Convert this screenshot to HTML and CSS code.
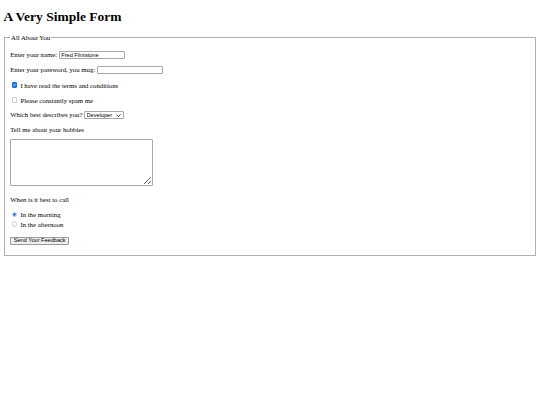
FILE: index.html
```html
<!DOCTYPE html>
<html lang="en">
<head>
<meta charset="utf-8">
<title>A Very Simple Form</title>
<link rel="stylesheet" href="styles.css">
</head>
<body>
<h1 class="title">A Very Simple Form</h1>
<form class="form">
<fieldset class="group">
<legend class="group-legend">All About You</legend>
<p class="row"><label>Enter your name: <input class="text" type="text" value="Fred Flintstone"></label></p>
<p class="row"><label>Enter your password, you mug: <input class="text" type="password"></label></p>
<p class="row"><label><input class="check" type="checkbox" checked> I have read the terms and conditions</label></p>
<p class="row"><label><input class="check" type="checkbox"> Please constantly spam me</label></p>
<p class="row"><label>Which best describes you? <span class="select-wrap"><select class="choice"><option>Developer</option><option>Designer</option><option>Manager</option></select><svg class="chev" viewBox="0 0 10 6" width="5" height="3"><path d="M1 1 L5 5 L9 1" fill="none" stroke="#333" stroke-width="1.8"/></svg></span></label></p>
<p class="row">Tell me about your hobbies</p>
<p class="row row-area"><textarea class="hobbies"></textarea></p>
<p class="row">When is it best to call</p>
<p class="row row-radios"><label><input class="radio" type="radio" name="when" checked> In the morning</label><br><label><input class="radio" type="radio" name="when"> In the afternoon</label></p>
<p class="row row-send"><button class="send" type="submit">Send Your Feedback</button></p>
</fieldset>
</form>
</body>
</html>
```
FILE: styles.css
```css
body {
  margin: 3.4px;
  font-family: "Liberation Serif", "Times New Roman", serif;
  font-size: 6.75px;
  color: #000;
  background: #fff;
}
.title {
  font-size: 13.5px;
  font-weight: bold;
  margin: 6px 0 9px;
}
.form {
  margin: 0;
}
.group {
  margin: 0 0.84px;
  padding: 2.4px 5px 3.5px;
  border: 1px solid #b0b0b0;
  min-width: 0;
}
.group-legend {
  padding: 0 0.84px;
}
.row {
  margin: 6.75px 0;
}
.row-area {
  margin-bottom: 9.5px;
}
.row-radios {
  margin-top: 7.5px;
  line-height: 8.5px;
}
.row-send {
  margin-top: 5.5px;
}
.text {
  box-sizing: border-box;
  width: 66px;
  height: 8px;
  padding: 0 1.5px;
  border: 1px solid #a8a8a8;
  border-radius: 1px;
  font-family: "Liberation Sans", Arial, sans-serif;
  font-size: 5.6px;
  vertical-align: middle;
}
.check,
.radio {
  appearance: none;
  box-sizing: border-box;
  width: 5.5px;
  height: 5.5px;
  margin: 1.3px 1.3px 1.3px 1.7px;
  border: 1px solid #cccccc;
  background: #fff;
  vertical-align: -1px;
}
.check {
  border-radius: 1px;
}
.radio {
  border-radius: 50%;
}
.check:checked {
  border-color: #1a73e8;
  background: #1a73e8 url("data:image/svg+xml,%3Csvg xmlns='http://www.w3.org/2000/svg' viewBox='0 0 10 10'%3E%3Cpath d='M2 5.2 L4.2 7.3 L8 2.8' fill='none' stroke='%23fff' stroke-width='1.8'/%3E%3C/svg%3E") center / 100% 100% no-repeat;
}
.radio:checked {
  border-color: #9fc4f5;
  background: radial-gradient(circle, #1a73e8 0 55%, #cfe1fb 62% 100%);
}
.select-wrap {
  position: relative;
  display: inline-block;
  vertical-align: middle;
}
.choice {
  appearance: none;
  box-sizing: border-box;
  width: 40px;
  height: 7.5px;
  padding: 0 1.5px;
  border: 1px solid #a8a8a8;
  border-radius: 1px;
  background: #fff;
  font-family: "Liberation Sans", Arial, sans-serif;
  font-size: 5.6px;
  color: #000;
  display: block;
}
.chev {
  position: absolute;
  right: 3px;
  top: 2.3px;
}
.hobbies {
  box-sizing: border-box;
  width: 143px;
  height: 47px;
  border: 1px solid #a8a8a8;
  border-radius: 1px;
  padding: 1px;
  display: block;
}
.send {
  box-sizing: border-box;
  height: 7.5px;
  padding: 0 2.5px;
  border: 1px solid #9a9a9a;
  border-radius: 1px;
  background: #efefef;
  font-family: "Liberation Sans", Arial, sans-serif;
  font-size: 5.6px;
  line-height: 1;
  color: #000;
}
```
